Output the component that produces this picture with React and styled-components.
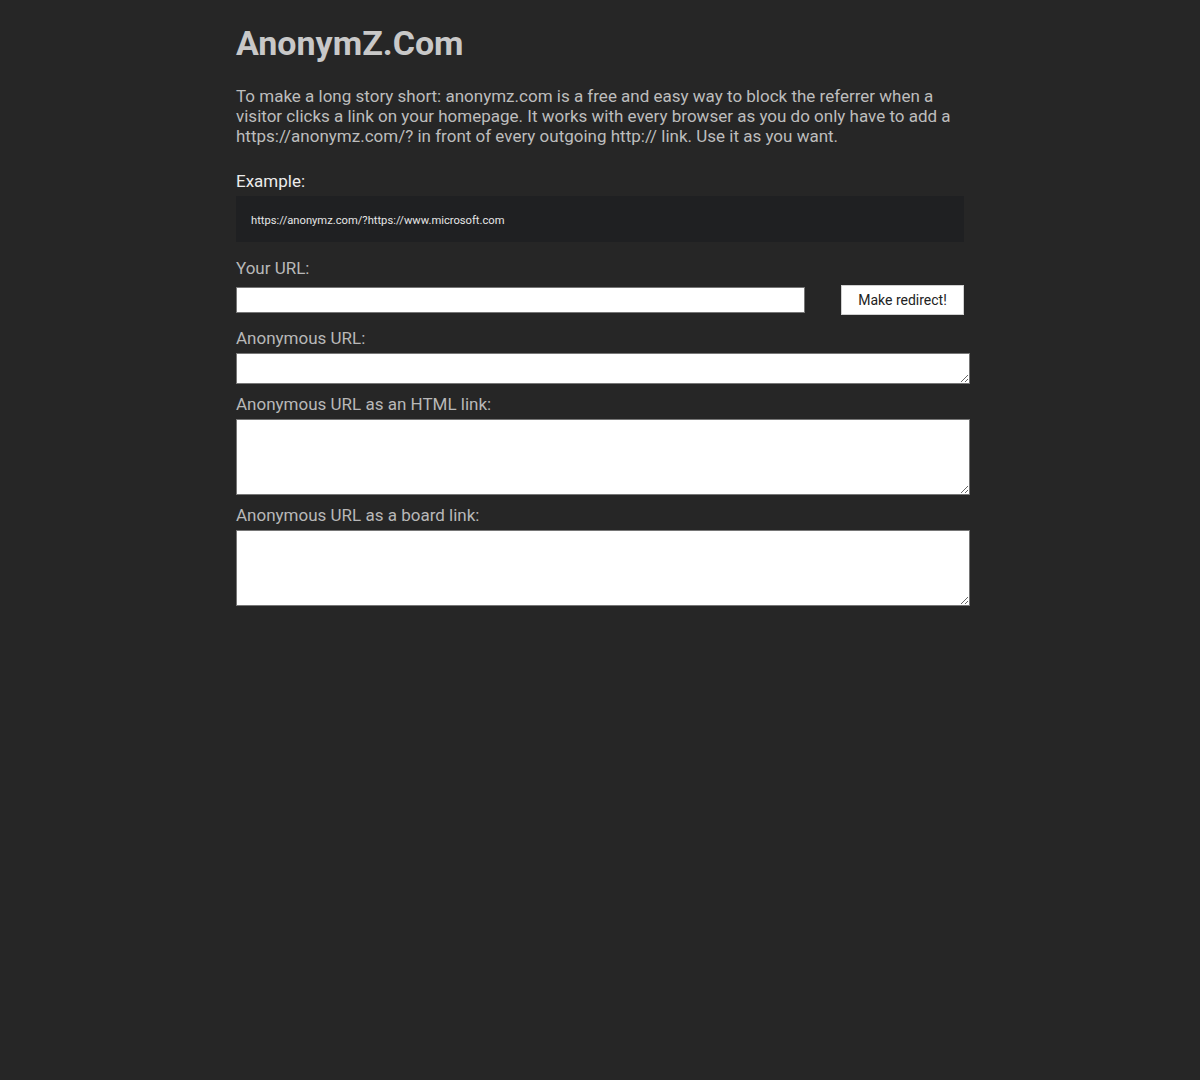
import React from "react";
import styled, { createGlobalStyle } from "styled-components";

const GlobalStyle = createGlobalStyle`
  html, body {
    margin: 0;
    background: #262626;
    font-family: Roboto, "Liberation Sans", sans-serif;
  }
`;

const Page = styled.main`
  width: 728px;
  margin: 0 auto;
  padding-top: 24px;
`;

const Title = styled.h1`
  margin: 0;
  font-size: 34px;
  line-height: 38px;
  font-weight: 700;
  color: #c8c8c8;
`;

const Intro = styled.p`
  margin: 24px 0 0;
  font-size: 17px;
  line-height: 20px;
  color: #bdbdbd;
`;

const Label = styled.div`
  font-size: 17px;
  line-height: 20px;
  color: ${props => (props.bright ? "#ececec" : "#b8b8b8")};
  margin-top: ${props => props.top}px;
  margin-bottom: ${props => props.bottom}px;
`;

const ExampleBox = styled.div`
  box-sizing: border-box;
  background: #1f2022;
  height: 46px;
  padding: 3px 15px 0;
  display: flex;
  align-items: center;
  font-size: 11.2px;
  color: #e6e6e6;
`;

const UrlRow = styled.div`
  display: flex;
  justify-content: space-between;
  align-items: center;
  height: 30px;
`;

const UrlInput = styled.input`
  box-sizing: border-box;
  width: 569px;
  height: 26px;
  border: 1px solid #767676;
  background: #fff;
  margin: 0;
`;

const RedirectButton = styled.button`
  box-sizing: border-box;
  width: 123px;
  height: 30px;
  border: 1px solid #d0d0d0;
  background: #fff;
  color: #222;
  font-family: Roboto, "Liberation Sans", sans-serif;
  font-size: 14px;
  cursor: pointer;
`;

const Output = styled.textarea`
  display: block;
  box-sizing: border-box;
  width: 734px;
  height: ${props => props.h}px;
  border: 1px solid #767676;
  background: #fff;
  margin: 0;
  resize: vertical;
`;

export default function App() {
  return (
    <>
      <GlobalStyle />
      <Page>
        <Title>AnonymZ.Com</Title>
        <Intro>
          To make a long story short: anonymz.com is a free and easy way to block the
          referrer when a visitor clicks a link on your homepage. It works with every
          browser as you do only have to add a https://anonymz.com/? in front of every
          outgoing http:// link. Use it as you want.
        </Intro>

        <Label bright top={25} bottom={5}>Example:</Label>
        <ExampleBox>https://anonymz.com/?https://www.microsoft.com</ExampleBox>

        <Label top={16} bottom={7}>Your URL:</Label>
        <UrlRow>
          <UrlInput type="text" />
          <RedirectButton>Make redirect!</RedirectButton>
        </UrlRow>

        <Label top={13} bottom={5}>Anonymous URL:</Label>
        <Output h={31} />

        <Label top={10} bottom={5}>Anonymous URL as an HTML link:</Label>
        <Output h={76} />

        <Label top={10} bottom={5}>Anonymous URL as a board link:</Label>
        <Output h={76} />
      </Page>
    </>
  );
}
